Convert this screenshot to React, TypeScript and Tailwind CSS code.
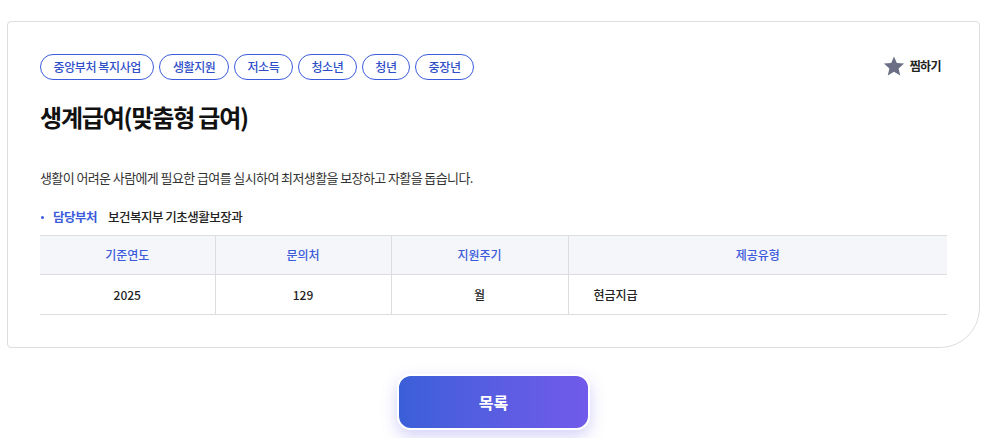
const tags = ['중앙부처 복지사업', '생활지원', '저소득', '청소년', '청년', '중장년']

const font = { fontFamily: '"Noto Sans CJK KR", "Noto Sans", sans-serif' }

function StarIcon() {
  return (
    <svg width="22" height="22" viewBox="0 0 24 24" className="text-[#6b6f85]">
      <path
        fill="currentColor"
        d="M12 1.5l3.1 7.2 7.9.7-6 5.2 1.8 7.7L12 18.3l-6.8 4 1.8-7.7-6-5.2 7.9-.7z"
      />
    </svg>
  )
}

export default function App() {
  return (
    <div className="bg-white min-h-[438px] pt-[21px] pl-[7px] pr-[24px]" style={font}>
      {/* Detail card */}
      <div className="border border-[#dddddd] rounded-[4px] rounded-br-[40px] px-[32px] pt-[32px] pb-[32px]">
        <div className="flex items-start justify-between">
          <div className="flex flex-wrap gap-[5px]">
            {tags.map((tag) => (
              <span
                key={tag}
                className="h-[26px] px-[12.5px] flex items-center border border-[#3b5bdb] rounded-full text-[12px] leading-none text-[#2f4fc9] font-medium tracking-[-0.4px]"
              >
                {tag}
              </span>
            ))}
          </div>
          <button className="flex items-center gap-[5px] mt-[1px] mr-[6px]">
            <StarIcon />
            <span className="text-[12px] font-bold text-[#222] tracking-[-0.6px]">찜하기</span>
          </button>
        </div>

        <h1 className="mt-[20px] text-[24px] font-bold text-[#111] leading-[34px] tracking-[-1.2px]">
          생계급여(맞춤형 급여)
        </h1>

        <p className="mt-[34px] text-[13px] text-[#333] leading-[20px] tracking-[-0.6px]">
          생활이 어려운 사람에게 필요한 급여를 실시하여 최저생활을 보장하고 자활을 돕습니다.
        </p>

        <div className="mt-[19px] flex items-center text-[12.5px] leading-[20px] tracking-[-0.5px]">
          <span className="w-[3px] h-[3px] rounded-full bg-[#3b5bdb] ml-[1px] mr-[9px]" />
          <span className="font-bold text-[#3b5bdb]">담당부처</span>
          <span className="ml-[11px] font-medium text-[#222]">보건복지부 기초생활보장과</span>
        </div>

        <table className="mt-[8px] w-full border-collapse text-[12px]">
          <thead>
            <tr className="bg-[#f5f6fa] border-t border-b border-[#dddddd]">
              <th className="w-[175px] h-[39px] font-medium text-[#3b5bdb] border-r border-[#dddddd]">기준연도</th>
              <th className="w-[176px] font-medium text-[#3b5bdb] border-r border-[#dddddd]">문의처</th>
              <th className="w-[177px] font-medium text-[#3b5bdb] border-r border-[#dddddd]">지원주기</th>
              <th className="font-medium text-[#3b5bdb]">제공유형</th>
            </tr>
          </thead>
          <tbody>
            <tr className="border-b border-[#dddddd]">
              <td className="h-[40px] text-center font-medium text-[#222] border-r border-[#dddddd]">2025</td>
              <td className="text-center font-medium text-[#222] border-r border-[#dddddd]">129</td>
              <td className="text-center font-medium text-[#222] border-r border-[#dddddd]">월</td>
              <td className="pl-[25px] font-medium text-[#222]">현금지급</td>
            </tr>
          </tbody>
        </table>
      </div>

      <div className="flex justify-center mt-[26px]">
        <button className="w-[193px] h-[56px] rounded-[14px] border-2 border-white bg-gradient-to-r from-[#3a5fd8] to-[#715aeb] text-white text-[16px] font-bold shadow-[0_6px_16px_rgba(110,100,230,0.3)]">
          목록
        </button>
      </div>
    </div>
  )
}
